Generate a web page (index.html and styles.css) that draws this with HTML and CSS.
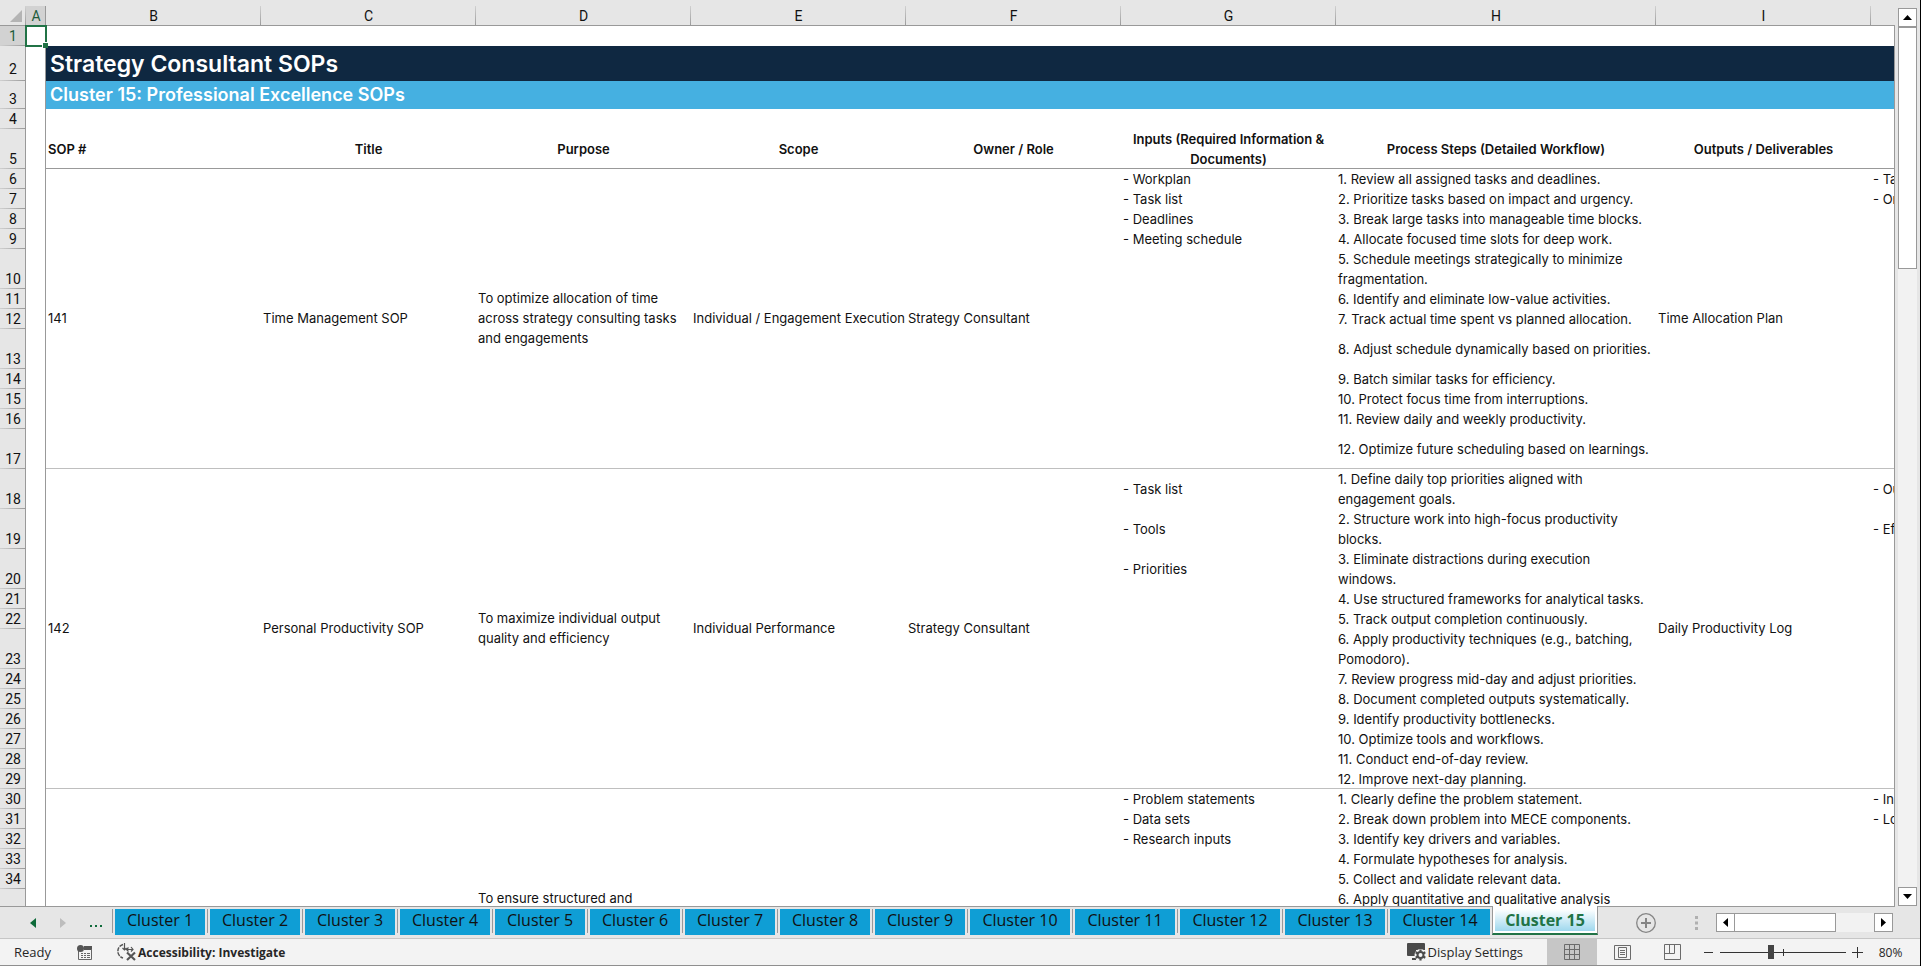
FILE: index.html
```
<!DOCTYPE html>
<html lang="en">
<head>
  <meta charset="UTF-8">
  <meta name="viewport" content="width=device-width, initial-scale=1.0">
  <title>Strategy Consultant SOPs</title>

  <link rel="stylesheet" href="styles.css">
</head>
<body>
  <main class="workspace">
    <div class="grid">
      <table class="sheet">
        <colgroup>
          <col class="col-head"><col class="col-a"><col><col><col><col><col><col><col class="col-steps"><col><col>
        </colgroup>
        <thead>
          <tr class="letters">
            <th class="corner"><svg width="12" height="12" viewBox="0 0 12 12"><path d="M12 0v12H0z" fill="#b4b4b4"/></svg></th>
            <th class="selected">A</th><th>B</th><th>C</th><th>D</th><th>E</th><th>F</th><th>G</th><th>H</th><th>I</th><th></th>
          </tr>
        </thead>
        <tbody>
          <tr><th class="selected">1</th><td class="gutter active-cell"></td><td colspan="9"></td></tr>
          <tr class="row-title"><th>2</th><td class="gutter"></td><td colspan="9" class="title">Strategy Consultant SOPs</td></tr>
          <tr class="row-subtitle"><th>3</th><td class="gutter"></td><td colspan="9" class="subtitle">Cluster 15: Professional Excellence SOPs</td></tr>
          <tr><th>4</th><td class="gutter"></td><td colspan="9"></td></tr>
          <tr class="tall headings">
            <th>5</th><td class="gutter"></td>
            <td class="first">SOP #</td><td>Title</td><td>Purpose</td><td>Scope</td><td>Owner / Role</td>
            <td>Inputs (Required Information &amp; Documents)</td>
            <td>Process Steps (Detailed Workflow)</td>
            <td>Outputs / Deliverables</td><td></td>
          </tr>

          <tr>
            <th>6</th><td class="gutter"></td>
            <td rowspan="12" class="merged">141</td>
            <td rowspan="12" class="merged">Time Management SOP</td>
            <td rowspan="12" class="merged wrap">To optimize allocation of time across strategy consulting tasks and engagements</td>
            <td rowspan="12" class="merged">Individual / Engagement Execution</td>
            <td rowspan="12" class="merged">Strategy Consultant</td>
            <td>- Workplan</td>
            <td>1. Review all assigned tasks and deadlines.</td>
            <td rowspan="12" class="merged">Time Allocation Plan</td>
            <td>- Task completion</td>
          </tr>
          <tr><th>7</th><td class="gutter"></td><td>- Task list</td><td>2. Prioritize tasks based on impact and urgency.</td><td>- On-time delivery</td></tr>
          <tr><th>8</th><td class="gutter"></td><td>- Deadlines</td><td>3. Break large tasks into manageable time blocks.</td><td></td></tr>
          <tr><th>9</th><td class="gutter"></td><td>- Meeting schedule</td><td>4. Allocate focused time slots for deep work.</td><td></td></tr>
          <tr class="tall"><th>10</th><td class="gutter"></td><td></td><td class="wrap">5. Schedule meetings strategically to minimize fragmentation.</td><td></td></tr>
          <tr><th>11</th><td class="gutter"></td><td></td><td>6. Identify and eliminate low-value activities.</td><td></td></tr>
          <tr><th>12</th><td class="gutter"></td><td></td><td>7. Track actual time spent vs planned allocation.</td><td></td></tr>
          <tr class="tall"><th>13</th><td class="gutter"></td><td></td><td>8. Adjust schedule dynamically based on priorities.</td><td></td></tr>
          <tr><th>14</th><td class="gutter"></td><td></td><td>9. Batch similar tasks for efficiency.</td><td></td></tr>
          <tr><th>15</th><td class="gutter"></td><td></td><td>10. Protect focus time from interruptions.</td><td></td></tr>
          <tr><th>16</th><td class="gutter"></td><td></td><td>11. Review daily and weekly productivity.</td><td></td></tr>
          <tr class="tall block-end"><th>17</th><td class="gutter"></td><td></td><td>12. Optimize future scheduling based on learnings.</td><td></td></tr>

          <tr class="tall">
            <th>18</th><td class="gutter"></td>
            <td rowspan="12" class="merged">142</td>
            <td rowspan="12" class="merged">Personal Productivity SOP</td>
            <td rowspan="12" class="merged wrap">To maximize individual output quality and efficiency</td>
            <td rowspan="12" class="merged">Individual Performance</td>
            <td rowspan="12" class="merged">Strategy Consultant</td>
            <td>- Task list</td>
            <td class="wrap">1. Define daily top priorities aligned with engagement goals.</td>
            <td rowspan="12" class="merged">Daily Productivity Log</td>
            <td>- Output quality</td>
          </tr>
          <tr class="tall"><th>19</th><td class="gutter"></td><td>- Tools</td><td class="wrap">2. Structure work into high-focus productivity blocks.</td><td>- Efficiency</td></tr>
          <tr class="tall"><th>20</th><td class="gutter"></td><td>- Priorities</td><td class="wrap">3. Eliminate distractions during execution windows.</td><td></td></tr>
          <tr><th>21</th><td class="gutter"></td><td></td><td>4. Use structured frameworks for analytical tasks.</td><td></td></tr>
          <tr><th>22</th><td class="gutter"></td><td></td><td>5. Track output completion continuously.</td><td></td></tr>
          <tr class="tall"><th>23</th><td class="gutter"></td><td></td><td class="wrap">6. Apply productivity techniques (e.g., batching, Pomodoro).</td><td></td></tr>
          <tr><th>24</th><td class="gutter"></td><td></td><td>7. Review progress mid-day and adjust priorities.</td><td></td></tr>
          <tr><th>25</th><td class="gutter"></td><td></td><td>8. Document completed outputs systematically.</td><td></td></tr>
          <tr><th>26</th><td class="gutter"></td><td></td><td>9. Identify productivity bottlenecks.</td><td></td></tr>
          <tr><th>27</th><td class="gutter"></td><td></td><td>10. Optimize tools and workflows.</td><td></td></tr>
          <tr><th>28</th><td class="gutter"></td><td></td><td>11. Conduct end-of-day review.</td><td></td></tr>
          <tr class="block-end"><th>29</th><td class="gutter"></td><td></td><td>12. Improve next-day planning.</td><td></td></tr>

          <tr>
            <th>30</th><td class="gutter"></td>
            <td rowspan="12" class="merged"></td>
            <td rowspan="12" class="merged"></td>
            <td rowspan="12" class="merged wrap">To ensure structured and effective resolution of client problems across engagements</td>
            <td rowspan="12" class="merged"></td>
            <td rowspan="12" class="merged"></td>
            <td>- Problem statements</td>
            <td>1. Clearly define the problem statement.</td>
            <td rowspan="12" class="merged"></td>
            <td>- Insight quality</td>
          </tr>
          <tr><th>31</th><td class="gutter"></td><td>- Data sets</td><td>2. Break down problem into MECE components.</td><td>- Logical rigor</td></tr>
          <tr><th>32</th><td class="gutter"></td><td>- Research inputs</td><td>3. Identify key drivers and variables.</td><td></td></tr>
          <tr><th>33</th><td class="gutter"></td><td></td><td>4. Formulate hypotheses for analysis.</td><td></td></tr>
          <tr><th>34</th><td class="gutter"></td><td></td><td>5. Collect and validate relevant data.</td><td></td></tr>
          <tr class="tall"><th>35</th><td class="gutter"></td><td></td><td class="wrap">6. Apply quantitative and qualitative analysis techniques.</td><td></td></tr>
          <tr><th>36</th><td class="gutter"></td><td></td><td></td><td></td></tr>
          <tr><th>37</th><td class="gutter"></td><td></td><td></td><td></td></tr>
          <tr><th>38</th><td class="gutter"></td><td></td><td></td><td></td></tr>
          <tr><th>39</th><td class="gutter"></td><td></td><td></td><td></td></tr>
          <tr><th>40</th><td class="gutter"></td><td></td><td></td><td></td></tr>
          <tr class="block-end"><th>41</th><td class="gutter"></td><td></td><td></td><td></td></tr>
        </tbody>
      </table>
    </div>

    <div class="vscroll">
      <button class="scroll-button" aria-label="Scroll up"><svg width="9" height="5" viewBox="0 0 9 5"><path d="M4.500 0 9 5H0z"/></svg></button>
      <div class="vscroll-thumb"></div>
      <button class="scroll-button scroll-end" aria-label="Scroll down"><svg width="9" height="5" viewBox="0 0 9 5"><path d="M0 0h9L4.500 5z"/></svg></button>
    </div>
  </main>

  <nav class="tab-bar">
    <div class="tab-nav">
      <button aria-label="Previous sheet"><svg width="6" height="10" viewBox="0 0 6 10"><path d="M6 0v10L0 5z" fill="#0e6b3a"/></svg></button>
      <button aria-label="Next sheet"><svg width="6" height="10" viewBox="0 0 6 10"><path d="M0 0v10l6-5z" fill="#bdbdbd"/></svg></button>
      <button aria-label="More sheets"><svg width="13" height="8" viewBox="0 0 13 8"><path d="M0 6h2v2H0zM5 6h2v2H5zM10 6h2v2h-2z" fill="#0e6b3a"/></svg></button>
    </div>
    <ul class="tabs">
      <li><button class="tab">Cluster 1</button></li>
      <li><button class="tab">Cluster 2</button></li>
      <li><button class="tab">Cluster 3</button></li>
      <li><button class="tab">Cluster 4</button></li>
      <li><button class="tab">Cluster 5</button></li>
      <li><button class="tab">Cluster 6</button></li>
      <li><button class="tab">Cluster 7</button></li>
      <li><button class="tab">Cluster 8</button></li>
      <li><button class="tab">Cluster 9</button></li>
      <li><button class="tab wide">Cluster 10</button></li>
      <li><button class="tab wide">Cluster 11</button></li>
      <li><button class="tab wide">Cluster 12</button></li>
      <li><button class="tab wide">Cluster 13</button></li>
      <li><button class="tab wide">Cluster 14</button></li>
      <li class="current"><button class="tab wide">Cluster 15</button></li>
    </ul>
    <button class="add-sheet" aria-label="New sheet">
      <svg width="20" height="20" viewBox="0 0 20 20" fill="none" stroke="#858585"><circle cx="10" cy="10" r="9.300" stroke-width="1.300"/><path d="M10 5v10M5 10h10" stroke-width="2"/></svg>
    </button>
    <svg class="grip" width="3" height="14" viewBox="0 0 3 14"><path d="M0 0h3v3H0zM0 5.500h3v3H0zM0 11h3v3H0z" fill="#b0b0b0"/></svg>
    <div class="hscroll">
      <button class="scroll-button" aria-label="Scroll left"><svg width="5" height="9" viewBox="0 0 5 9"><path d="M5 0v9L0 4.500z"/></svg></button>
      <div class="hscroll-thumb"></div>
      <button class="scroll-button scroll-end" aria-label="Scroll right"><svg width="5" height="9" viewBox="0 0 5 9"><path d="M0 0v9l5-4.500z"/></svg></button>
    </div>
  </nav>

  <footer class="status-bar">
    <span class="ready">Ready</span>
    <button class="macro" aria-label="Record macro">
      <svg width="16" height="15" viewBox="0 0 16 15"><path d="M7 1h8v4H7z" fill="#555"/><path d="M1.500 5v9.500h13V4" fill="none" stroke="#666"/><circle cx="3.500" cy="3.500" r="3.500" fill="#555"/><path d="M4 8.500h2M7 8.500h2M10 8.500h3M4 10.500h2M7 10.500h2M10 10.500h3M4 12.500h2M7 12.500h2M10 12.500h3" stroke="#666"/></svg>
    </button>
    <button class="accessibility">
      <svg width="20" height="18" viewBox="0 0 20 18" fill="none" stroke="#555"><path d="M6 1.500A7 7 0 0 0 6 15" stroke-width="1.500" stroke-dasharray="4 1"/><path d="M7.500 0v7M5.500 5l2 2 2-2M9.500 6.500h6M11.500 4.500l-2 2 2 2M14 4l2 2.500-2 2" stroke-width="1.200"/><path d="M10 9.500l8 7.500M18 9.500L10 17" stroke-width="2.200"/></svg>
      Accessibility: Investigate
    </button>
    <div class="status-right">
      <button class="display-settings">
        <svg width="20" height="18" viewBox="0 0 20 18"><path d="M1 0h16a1 1 0 0 1 1 1v6H9v6H1a1 1 0 0 1-1-1V1a1 1 0 0 1 1-1zM5 15h4v2H5z" fill="#4a4a4a"/><circle cx="13.500" cy="12" r="6" fill="#f3f3f3"/><circle cx="13.500" cy="12" r="3" fill="none" stroke="#4a4a4a" stroke-width="2"/><path d="M13.500 6.500v2M13.500 15.500v2M8.700 9.300l1.800 1M16.500 13.700l1.800 1M8.700 14.700l1.800-1M16.500 10.300l1.800-1" stroke="#4a4a4a" stroke-width="2.200"/></svg>
        Display Settings
      </button>
      <button class="view pressed" aria-label="Normal view"><svg width="16" height="16" viewBox="0 0 16 16" fill="none" stroke="#6b6b6b"><path d="M.5.5h15v15H.5zM5.500.5v15M10.500.5v15M.5 5.500h15M.5 10.500h15"/></svg></button>
      <button class="view" aria-label="Page layout"><svg width="17" height="15" viewBox="0 0 17 15" fill="none" stroke="#6b6b6b"><path d="M.5.5h16v14H.5zM4.500 2.500h8v10h-8zM6 5.500h5M6 7.500h5M6 9.500h5"/></svg></button>
      <button class="view" aria-label="Page break preview"><svg width="17" height="16" viewBox="0 0 17 16" fill="none" stroke="#6b6b6b"><path d="M.5.5h16v15H.5zM5.500.5v9M10.500.5v9H.5"/></svg></button>
      <button class="zoom-button" aria-label="Zoom out"><svg width="11" height="11" viewBox="0 0 11 11"><path d="M1 5.500h9" stroke="#333"/></svg></button>
      <input class="zoom-slider" type="range" min="0" max="200" value="80" aria-label="Zoom">
      <button class="zoom-button" aria-label="Zoom in"><svg width="11" height="11" viewBox="0 0 11 11"><path d="M0 5.500h11M5.500 0v11" stroke="#333"/></svg></button>
      <button class="zoom-level">80%</button>
    </div>
  </footer>
</body>
</html>
```
FILE: styles.css
```
* {
  box-sizing: border-box;
}

body {
  margin: 0;
  height: 100vh;
  display: flex;
  flex-direction: column;
  overflow: hidden;
  background: #e6e6e6;
  border-right: 1px solid #000;
  font-family: "Open Sans", "Noto Sans", sans-serif;
  font-size: 13px;
  color: #262626;
}

button {
  display: flex;
  align-items: center;
  justify-content: center;
  margin: 0;
  padding: 0;
  border: 0;
  background: none;
  font: inherit;
  color: inherit;
  white-space: nowrap;
}

svg {
  display: block;
  flex: none;
}

/* Grid */

.workspace {
  flex: 1;
  min-height: 0;
  display: flex;
}

.grid {
  position: relative;
  flex: 1;
  min-width: 0;
  overflow: hidden;
  border-bottom: 1px solid #999;
}

.grid::after {
  content: "";
  position: absolute;
  top: 25px;
  right: 0;
  bottom: 0;
  width: 1px;
  background: #999;
}

.sheet {
  table-layout: fixed;
  width: 2086px;
  border-spacing: 0;
  background: #fff;
  font-family: Inter, Roboto, sans-serif;
  line-height: 20px;
  color: #111;
}

.sheet col {
  width: 215px;
}

.sheet .col-head {
  width: 26px;
}

.sheet .col-a {
  width: 20px;
}

.sheet .col-steps {
  width: 320px;
}

.sheet tr {
  height: 20px;
}

.sheet .tall {
  height: 40px;
}

.sheet .row-title {
  height: 35px;
}

.sheet .row-subtitle {
  height: 28px;
}

.sheet th {
  padding: 0;
  background: linear-gradient(90deg, #d0d0d0, #999) 0 100% / 100% 1px no-repeat #e6e6e6;
  box-shadow: inset -1px 0 #999;
  font-family: Roboto, sans-serif;
  font-size: 14px;
  font-weight: normal;
  vertical-align: bottom;
}

.sheet .row-title th {
  padding-bottom: 2px;
}

.sheet .letters {
  height: 26px;
}

.sheet .letters th {
  padding-top: 6px;
  background: linear-gradient(#d0d0d0, #999) 100% 100% / 1px 20px no-repeat #e6e6e6;
  box-shadow: inset 0 -1px #999;
}

.sheet .letters .corner {
  padding: 0 0 4px 10px;
}

.sheet tbody .selected {
  background-color: #d2d2d2;
  color: #1e5c3a;
}

.sheet .letters .selected {
  background:
    linear-gradient(#999, #999) 100% 100% / 1px 20px no-repeat,
    linear-gradient(#d2d2d2, #d2d2d2) 0 100% / 100% 20px no-repeat #e6e6e6;
  color: #1e5c3a;
}

.sheet td {
  padding: 0 2px;
  white-space: nowrap;
  vertical-align: middle;
}

.sheet td.wrap {
  white-space: normal;
}

.sheet td.wrap:not(.merged) {
  padding-right: 12px;
}

.sheet td.merged {
  padding-bottom: 2px;
}

.sheet td.gutter {
  box-shadow: inset -1px 0 #999;
}

.active-cell {
  position: relative;
}

.active-cell::before {
  content: "";
  position: absolute;
  inset: -1px;
  border: 2px solid #217346;
}

.active-cell::after {
  content: "";
  position: absolute;
  right: -2px;
  bottom: -2px;
  width: 5px;
  height: 5px;
  background: #217346;
  box-shadow: -1px -1px #fff;
}

.sheet .title {
  padding: 0 4px;
  background: #0f2841;
  color: #fff;
  font-size: 23px;
  font-weight: 600;
  line-height: 32px;
}

.sheet .subtitle {
  padding: 0 4px;
  background: #45b0e1;
  color: #fff;
  font-size: 18px;
  font-weight: 600;
  line-height: 28px;
}

.headings td {
  box-shadow: inset 0 -1px #999;
  font-weight: 600;
  text-align: center;
}

.headings .first {
  text-align: left;
}

.sheet .headings td:not(.gutter) {
  white-space: normal;
}

.merged,
.block-end td:not(.gutter) {
  box-shadow: inset 0 -1px #bfbfbf;
}

/* Scroll bars */

.scroll-button {
  width: 19px;
  height: 19px;
  flex: none;
  border: 1px solid #999;
  background: #fff;
}

.scroll-end {
  margin: auto 0 0 auto;
}

.vscroll {
  display: flex;
  flex-direction: column;
  width: 19px;
  margin: 8px 3px 1px;
  background: #f2f2f2;
}

.vscroll-thumb {
  height: 27%;
  border: 1px solid #999;
  background: #fff;
}

.hscroll {
  display: flex;
  width: 177px;
  margin-right: 27px;
  background: #f2f2f2;
}

.hscroll-thumb {
  width: 101px;
  border: 1px solid #999;
  border-left: 0;
  background: #fff;
}

/* Sheet tabs */

.tab-bar {
  display: flex;
  align-items: center;
  height: 31px;
}

.tab-nav {
  display: flex;
  align-items: center;
  justify-content: space-between;
  width: 110px;
  padding: 0 7px 0 30px;
}

.tabs {
  display: flex;
  align-self: flex-start;
  margin: 0;
  padding: 0;
  list-style: none;
}

.tabs li {
  height: 24px;
  margin: 2px 0 0 2px;
  padding-left: 2px;
  border-left: 1px solid #999;
}

.tab {
  width: 90px;
  height: 26px;
  padding-bottom: 4px;
  background: #0f9ed5;
  color: #111;
  font-size: 16px;
  line-height: 20px;
}

.tab.wide {
  width: 100px;
}

.tabs .current {
  position: relative;
  height: 29px;
  margin-top: -1px;
  padding: 3px 2px;
  border-right: 1px solid #999;
  border-bottom: 2px solid #217346;
  background: #fff;
}

.current .tab {
  height: 22px;
  padding-bottom: 0;
  background: linear-gradient(#fff, #9fd8ee);
  color: #217346;
  font-weight: bold;
}

.add-sheet {
  margin-left: 38px;
}

.grip {
  margin: 0 18px 0 auto;
}

/* Status bar */

.status-bar {
  display: flex;
  align-items: center;
  height: 28px;
  padding-left: 14px;
  border-top: 1px solid #c6c6c6;
  border-bottom: 1px solid #8f8f8f;
  background: #f3f3f3;
}

.macro {
  margin: 0 24px 0 26px;
}

.accessibility {
  gap: 1px;
  font-size: 12px;
  font-weight: bold;
}

.status-right {
  display: flex;
  align-items: center;
  align-self: stretch;
  margin-left: auto;
}

.display-settings {
  gap: 1px;
  margin-right: 24px;
}

.view {
  width: 50px;
  align-self: stretch;
}

.view.pressed {
  background: #c6c6c6;
}

.zoom-button {
  margin: 0 6px;
}

.zoom-slider {
  appearance: none;
  width: 126px;
  height: 14px;
  margin: 0;
  background:
    linear-gradient(#333, #333) 50% 50% / 1px 7px no-repeat,
    linear-gradient(#333, #333) 0 50% / 100% 1px no-repeat;
}

.zoom-slider::-webkit-slider-thumb {
  appearance: none;
  width: 6px;
  height: 14px;
  background: #444;
}

.zoom-level {
  width: 51px;
  padding-right: 8px;
  font-size: 12px;
}
```
